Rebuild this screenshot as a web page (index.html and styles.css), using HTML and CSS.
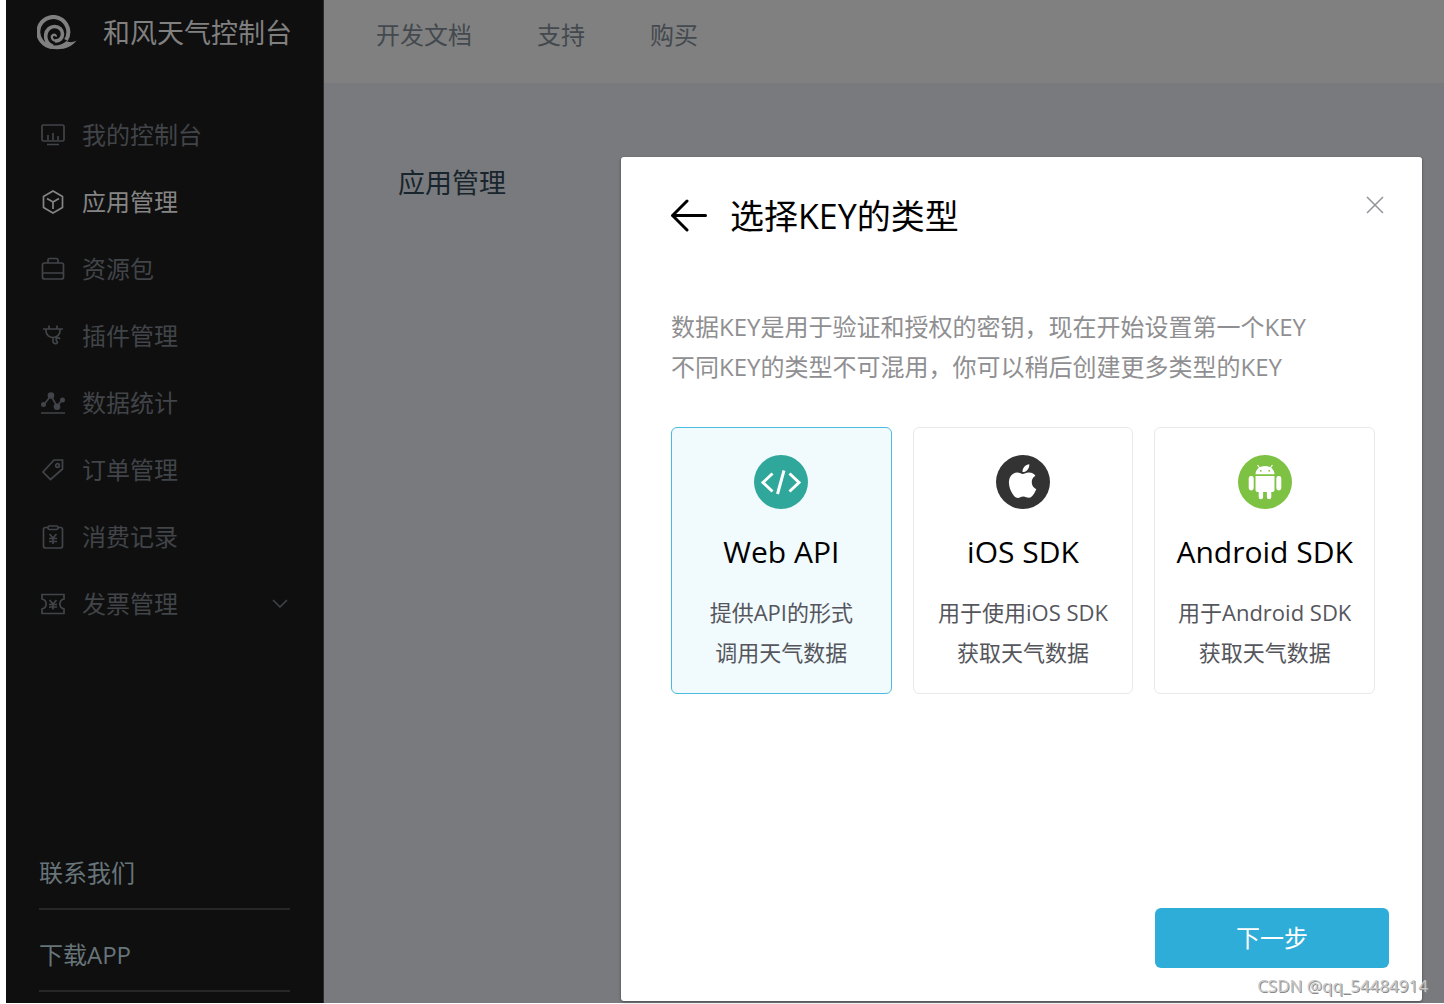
FILE: index.html
```html
<!DOCTYPE html>
<html lang="zh-CN">
<head>
<meta charset="utf-8">
<title>和风天气控制台</title>
<link rel="stylesheet" href="styles.css">
</head>
<body>
<div class="app">
  <aside class="sidebar">
    <a class="brand" href="#">
      <svg class="brand-logo" viewBox="0 0 40 36" aria-hidden="true">
        <g fill="none" stroke="currentColor">
          <path d="M29 25A15 15 0 1 0 16 32" stroke-width="4"/>
          <path d="M16 31.500C10.500 29 8.200 25 8.700 20C9.300 14.500 13.500 11.500 17.500 11.500C22.500 11.500 25.500 15 25.500 19C25.500 23.500 22 26.300 18 25.800" stroke-width="3.6"/>
          <path d="M19 25.800C14.800 25.800 13.800 21.500 16 20C17.500 19.200 19.300 20 18.800 21.600" stroke-width="2.2"/>
        </g>
        <path fill="currentColor" d="M12 33.200C24 36 34 33 39.500 25.500C35.500 27.800 31.500 27.500 29.500 26C26 29.500 20 31.500 13 30Z"/>
      </svg>
      <span>和风天气控制台</span>
    </a>
    <nav class="menu" aria-label="控制台">
      <a class="menu-item" href="#">
        <svg class="icon" viewBox="0 0 24 24"><rect x="1" y="2" width="22" height="16" rx="1.500"/><path d="M6 21.500h12M7 17v-5M12 17V10M17 17v-4"/></svg>
        <span>我的控制台</span>
      </a>
      <a class="menu-item active" href="#" aria-current="page">
        <svg class="icon" viewBox="0 0 24 24"><path d="M12 1l9.500 5.500v11L12 23l-9.500-5.500v-11zM6 8.500l6 3.500 6-3.500M12 12v7"/></svg>
        <span>应用管理</span>
      </a>
      <a class="menu-item" href="#">
        <svg class="icon" viewBox="0 0 24 24"><rect x="1.500" y="6" width="21" height="16" rx="2"/><path d="M7 6V3q0-1.500 1.500-1.500h7q1.500 0 1.500 1.500v3M1.500 16h21"/></svg>
        <span>资源包</span>
      </a>
      <a class="menu-item" href="#">
        <svg class="icon" viewBox="0 0 24 24"><path d="M2 5h20M8 1.500V5M16 1.500V5M5 5v2a7 6.500 0 0 0 14 0V5M12 13.500v4.500a2.500 2.500 0 0 0 4.500 0.500c0-1.500-1.500-1.500-1.500-3s2.500-2.500 4-.5"/></svg>
        <span>插件管理</span>
      </a>
      <a class="menu-item" href="#">
        <svg class="icon" viewBox="0 0 24 24"><path d="M3 13.500L10 4.500l6 11L21 9M0 22h24"/><g fill="currentColor" stroke="none"><circle cx="2.500" cy="13.500" r="2.500"/><circle cx="10" cy="4.500" r="3.300"/><circle cx="16" cy="15.800" r="3.300"/><circle cx="21.500" cy="9" r="2.500"/></g></svg>
        <span>数据统计</span>
      </a>
      <a class="menu-item" href="#">
        <svg class="icon" viewBox="0 0 24 24"><path d="M21.500 2v9L9.500 21.500l-7.500-7.500L13 2z"/><circle cx="16.500" cy="7.500" r="1.800"/></svg>
        <span>订单管理</span>
      </a>
      <a class="menu-item" href="#">
        <svg class="icon" viewBox="0 0 24 24"><path d="M7 2.500H4.500q-2 0-2 2V21q0 2 2 2h15q2 0 2-2V4.500q0-2-2-2H17"/><rect x="7" y="1" width="10" height="3.500" rx="1.500"/><path d="M8.500 9l3.500 4 3.500-4M8 13.500h8M8 16.500h8M12 13v6"/></svg>
        <span>消费记录</span>
      </a>
      <a class="menu-item" href="#" aria-expanded="false">
        <svg class="icon" viewBox="0 0 24 24"><path d="M1 2.500h22v4.500c-5.500 1.500-5.500 8.500 0 10V21.500H1v-4.500c5.500-1.500 5.500-8.500 0-10zM8.500 8l3.500 4 3.500-4M8 12.500h8M8 15h8M12 12v5.500"/></svg>
        <span>发票管理</span>
        <svg class="chevron" viewBox="0 0 16 10"><path d="M1 1l7 7 7-7"/></svg>
      </a>
    </nav>
    <nav class="side-links" aria-label="更多">
      <a href="#">联系我们</a>
      <a href="#">下载APP</a>
    </nav>
  </aside>
  <div class="content">
    <header class="topbar">
      <a href="#">开发文档</a>
      <a href="#">支持</a>
      <a href="#">购买</a>
    </header>
    <main class="page">
      <h1>应用管理</h1>
    </main>
  </div>
</div>

<div class="overlay">
  <form class="dialog" role="dialog" aria-modal="true" aria-labelledby="dialog-title">
    <div class="dialog-head">
      <button class="back" type="button" aria-label="返回">
        <svg viewBox="0 0 38 34"><path d="M16 2L1.500 16.500l14.500 14.500M1.500 16.500h33"/></svg>
      </button>
      <h2 id="dialog-title">选择KEY的类型</h2>
      <button class="close" type="button" aria-label="关闭">
        <svg viewBox="0 0 18 18"><path d="M1 1l16 16M17 1L1 17"/></svg>
      </button>
    </div>
    <p class="intro">数据KEY是用于验证和授权的密钥，现在开始设置第一个KEY<br>不同KEY的类型不可混用，你可以稍后创建更多类型的KEY</p>
    <div class="options" role="radiogroup" aria-labelledby="dialog-title">
      <label class="option">
        <input type="radio" name="key-type" value="web" checked>
        <svg class="badge" viewBox="0 0 54 54" aria-hidden="true"><circle cx="27" cy="27" r="27" fill="#2fa79b"/><path d="M18.500 18.500L9 27.500l9.500 9M35.500 18.500l9.500 9-9.500 9M30 15.500L23.500 39" fill="none" stroke="#fff" stroke-width="3"/></svg>
        <span class="option-name">Web API</span>
        <span class="option-text">提供API的形式<br>调用天气数据</span>
      </label>
      <label class="option">
        <input type="radio" name="key-type" value="ios">
        <svg class="badge" viewBox="0 0 54 54" aria-hidden="true"><circle cx="27" cy="27" r="27" fill="#333"/><path fill="#fff" transform="translate(9.800 9.300) scale(1.400)" d="M12.152 6.896c-.948 0-2.415-1.078-3.960-1.040-2.040.027-3.910 1.183-4.961 3.014-2.117 3.675-.546 9.103 1.519 12.090 1.013 1.454 2.208 3.090 3.792 3.039 1.520-.065 2.090-.987 3.935-.987 1.831 0 2.350.987 3.960.948 1.637-.026 2.676-1.480 3.676-2.948 1.156-1.688 1.636-3.325 1.662-3.415-.039-.013-3.182-1.221-3.220-4.857-.026-3.040 2.480-4.494 2.597-4.559-1.429-2.090-3.623-2.324-4.390-2.376-2-.156-3.675 1.090-4.610 1.090zM15.530 3.830c.843-1.012 1.400-2.427 1.245-3.830-1.207.052-2.662.805-3.532 1.818-.780.896-1.454 2.338-1.273 3.714 1.338.104 2.715-.688 3.560-1.702z"/></svg>
        <span class="option-name">iOS SDK</span>
        <span class="option-text">用于使用iOS SDK<br>获取天气数据</span>
      </label>
      <label class="option">
        <input type="radio" name="key-type" value="android">
        <svg class="badge" viewBox="0 0 54 54" aria-hidden="true"><circle cx="27" cy="27" r="27" fill="#7dc242"/><g fill="#fff"><path d="M17.500 19.300c0-4 3-8.300 9.500-8.300s9.500 4.300 9.500 8.300z"/><path d="M17.500 21h19v14q0 2-2 2h-1.200v5a2.200 2.200 0 0 1-4.400 0v-5h-3.800v5a2.200 2.200 0 0 1-4.400 0v-5h-1.200q-2 0-2-2z"/><rect x="10.700" y="21" width="5" height="14.500" rx="2.400"/><rect x="38.300" y="21" width="5" height="14.500" rx="2.400"/></g><path d="M19.500 10l3 4M34.500 10l-3 4" stroke="#fff" stroke-width="1.200"/><circle cx="22.800" cy="15.800" r=".9" fill="#7dc242"/><circle cx="31.200" cy="15.800" r=".9" fill="#7dc242"/></svg>
        <span class="option-name">Android SDK</span>
        <span class="option-text">用于Android SDK<br>获取天气数据</span>
      </label>
    </div>
    <button class="next" type="submit">下一步</button>
  </form>
</div>
<div class="watermark">CSDN @qq_54484914</div>
</body>
</html>
```
FILE: styles.css
```css
* {
  box-sizing: border-box;
}

body {
  margin: 0;
  background: #fff;
  font-family: "Open Sans", "Noto Sans CJK SC", sans-serif;
  font-size: 24px;
  line-height: 40px;
}

a {
  color: inherit;
  text-decoration: none;
}

h1,
h2,
p {
  margin: 0;
  font-weight: 400;
}

button {
  padding: 0;
  border: 0;
  background: none;
  font: inherit;
  cursor: pointer;
}

svg {
  display: block;
  flex: none;
}

.app {
  display: flex;
  min-height: 100vh;
  padding: 0 0 1px 6px;
}

/* Sidebar */
.sidebar {
  display: flex;
  flex: none;
  flex-direction: column;
  width: 318px;
  padding-bottom: 11px;
  border-right: 1px solid #2b2b2b;
  background: #0f0f0f;
}

.brand {
  display: flex;
  align-items: center;
  gap: 26px;
  height: 66px;
  padding-left: 31px;
  color: #808080;
  font-size: 27px;
}

.brand-logo {
  width: 40px;
  height: 36px;
}

.menu {
  margin-top: 35px;
}

.menu-item {
  display: flex;
  align-items: center;
  gap: 17px;
  height: 67px;
  padding: 0 35px;
  color: #414448;
}

.menu-item.active {
  color: #858585;
}

.icon {
  width: 24px;
  height: 24px;
  fill: none;
  stroke: currentColor;
  stroke-width: 1.7;
}

.chevron {
  width: 16px;
  height: 10px;
  margin-left: auto;
  fill: none;
  stroke: currentColor;
  stroke-width: 1.5;
}

.side-links {
  margin-top: auto;
  padding: 0 33px;
  color: #67757a;
}

.side-links a {
  display: block;
  padding: 25px 0 15px;
  border-bottom: 2px solid #272727;
}

/* Page behind the dialog */
.content {
  display: flex;
  flex: 1;
  flex-direction: column;
  background: #797a7e;
}

.topbar {
  display: flex;
  gap: 65px;
  height: 83px;
  padding: 15px 52px;
  background: #808080;
  color: #43494e;
}

.page {
  padding: 80px 74px;
  color: #18252c;
}

.page h1 {
  font-size: 27px;
}

/* Dialog */
.overlay {
  position: absolute;
  inset: 0;
  display: flex;
  justify-content: flex-end;
  padding: 157px 22px 3px;
}

.dialog {
  display: flex;
  flex-direction: column;
  width: 100%;
  max-width: 801px;
  padding: 39px 33px 33px 50px;
  border-radius: 3px;
  background: #fff;
  box-shadow: 0 1px 3px rgba(0, 0, 0, 0.4);
}

.dialog-head {
  display: flex;
  gap: 21px;
}

.dialog-head h2 {
  flex: 1;
  font-size: 34px;
}

.back svg {
  width: 38px;
  height: 34px;
  fill: none;
  stroke: #000;
  stroke-width: 3;
  stroke-linecap: round;
}

.close {
  align-self: flex-start;
  padding: 0 5px;
}

.close svg {
  width: 18px;
  height: 18px;
  fill: none;
  stroke: #909399;
  stroke-width: 1.5;
}

.intro {
  margin-top: 71px;
  color: #8f8f92;
}

.options {
  display: grid;
  grid-template-columns: repeat(3, 1fr);
  gap: 21px;
  margin: 40px 14px 0 0;
}

.option {
  position: relative;
  display: flex;
  flex-direction: column;
  align-items: center;
  padding: 27px 0 21px;
  border: 1px solid #e9e9eb;
  border-radius: 6px;
  text-align: center;
  cursor: pointer;
}

.option:has(input:checked) {
  border-color: #4dbbe0;
  background: #f1fafd;
}

.option input {
  position: absolute;
  margin: 0;
  opacity: 0;
}

.badge {
  width: 54px;
  height: 54px;
}

.option-name {
  margin-top: 23px;
  color: #000;
  font-size: 30px;
}

.option-text {
  margin-top: 20px;
  color: #55565c;
  font-size: 22px;
}

.next {
  align-self: flex-end;
  width: 234px;
  height: 60px;
  margin-top: auto;
  border-radius: 6px;
  background: #2fadd9;
  color: #fff;
}

.watermark {
  position: absolute;
  right: 16px;
  bottom: 6px;
  color: #c8c8c8;
  font-size: 17px;
  line-height: 24px;
  text-shadow: 1px 1px 0 #8a8a8a;
}
```
